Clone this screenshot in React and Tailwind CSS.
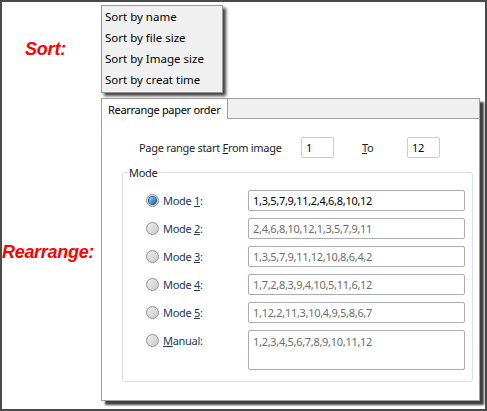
const FONT = { fontFamily: '"Noto Sans", "Open Sans", sans-serif' };
const LABEL_FONT = { fontFamily: '"Liberation Sans", Arial, sans-serif' };

const menuItems = [
  "Sort by name",
  "Sort by file size",
  "Sort by Image size",
  "Sort by creat time",
];

const modes = [
  { key: "1", label: ["Mode ", "1", ":"], value: "1,3,5,7,9,11,2,4,6,8,10,12", checked: true },
  { key: "2", label: ["Mode ", "2", ":"], value: "2,4,6,8,10,12,1,3,5,7,9,11" },
  { key: "3", label: ["Mode ", "3", ":"], value: "1,3,5,7,9,11,12,10,8,6,4,2" },
  { key: "4", label: ["Mode ", "4", ":"], value: "1,7,2,8,3,9,4,10,5,11,6,12" },
  { key: "5", label: ["Mode ", "5", ":"], value: "1,12,2,11,3,10,4,9,5,8,6,7" },
];

const Radio = ({ checked }) => (
  <span className="flex h-[13px] w-[13px] shrink-0 items-center justify-center rounded-full border border-[#8e8f8f] bg-gradient-to-br from-[#eeeeee] to-[#cbcbcb]">
    {checked && (
      <span className="h-[7px] w-[7px] rounded-full bg-gradient-to-br from-[#8fd8ff] to-[#0a5ea8] ring-1 ring-[#1c5180]" />
    )}
  </span>
);

const Label = ({ parts }) => (
  <span className="text-[#1e395b]">
    {parts[0]}
    <span className="underline">{parts[1]}</span>
    {parts[2]}
  </span>
);

const Field = ({ value, active, tall }) => (
  <div
    className={`flex w-[217px] rounded-[2px] border border-[#abadb3] bg-white px-[4px] whitespace-nowrap ${
      tall ? "h-[40px] items-start pt-[5px]" : "h-[21px] items-center"
    } ${active ? "text-black" : "text-[#6d6d6d]"}`}
  >
    {value}
  </div>
);

export default function App() {
  return (
    <div
      className="flex h-[411px] w-[487px] flex-col border-2 border-[#4a4a4a] bg-white text-[11px] leading-none tracking-[-0.3px] whitespace-nowrap"
      style={FONT}
    >
      <div className="flex h-[94px]">
        <div className="flex w-[99px] items-center pl-[23px]">
          <span className="text-[18px] font-bold italic tracking-[-0.2px] text-[#ff0000]" style={LABEL_FONT}>
            Sort:
          </span>
        </div>
        <div className="pt-[3px]">
          <div className="w-[122px] border border-[#979797] bg-[#f0f0f0] pb-[2px] shadow-[3px_3px_3px_rgba(0,0,0,0.75)]">
            {menuItems.map((item) => (
              <div key={item} className="flex h-[21px] items-center pl-[3px] text-[11.5px] tracking-normal text-black">
                {item}
              </div>
            ))}
          </div>
        </div>
      </div>

      <div className="flex">
        <div className="flex w-[99px] items-center pt-[6px]">
          <span className="text-[18px] font-bold italic text-[#ff0000]" style={LABEL_FONT}>
            Rearrange:
          </span>
        </div>

        <div className="mt-[2px] h-[303px] w-[379px] border border-[#a0a0a0] bg-white shadow-[4px_4px_2px_rgba(0,0,0,0.75)]">
          <div className="flex h-[20px]">
            <div className="flex w-[126px] items-center border-r border-[#a0a0a0] bg-white pl-[6px] text-black">
              Rearrange paper order
            </div>
            <div className="flex-1 border-b border-[#a0a0a0] bg-[#f0f0f0]" />
          </div>

          <div className="flex h-[48px] items-center pt-[8px]">
            <span className="ml-[37px] text-[#1e1e1e]">
              Page range start <span className="underline">F</span>rom image
            </span>
            <div className="ml-auto flex items-center">
              <div className="flex h-[21px] w-[33px] items-center rounded-[2px] border border-[#c8cdd3] px-[4px] text-black">
                1
              </div>
              <span className="ml-[28px] w-[45px] text-[#1e1e1e]">
                <span className="underline">T</span>o
              </span>
              <div className="mr-[39px] flex h-[21px] w-[33px] items-center rounded-[2px] border border-[#c8cdd3] px-[4px] text-black">
                12
              </div>
            </div>
          </div>

          <fieldset className="ml-[20px] h-[215px] w-[351px] rounded-[3px] border border-[#d5dfe5]">
            <legend className="ml-[5px] px-[1px] text-[#1e1e1e]">Mode</legend>
            <div className="flex flex-col gap-[7px] pl-[23px] pt-[12px]">
              {modes.map((m) => (
                <div key={m.key} className="flex items-center">
                  <Radio checked={m.checked} />
                  <span className="ml-[4px] w-[85px]">
                    <Label parts={m.label} />
                  </span>
                  <Field value={m.value} active={m.checked} />
                </div>
              ))}
              <div className="flex items-start">
                <div className="flex h-[21px] items-center">
                  <Radio />
                  <span className="ml-[4px] w-[85px]">
                    <Label parts={["", "M", "anual:"]} />
                  </span>
                </div>
                <Field value="1,2,3,4,5,6,7,8,9,10,11,12" tall />
              </div>
            </div>
          </fieldset>
        </div>
      </div>
    </div>
  );
}
